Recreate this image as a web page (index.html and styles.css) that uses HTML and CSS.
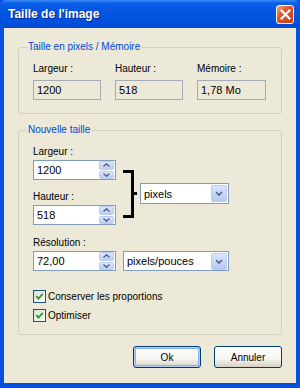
FILE: index.html
```html
<!DOCTYPE html>
<html lang="fr">
<head>
    <meta charset="UTF-8">
    <title>Taille de l'image</title>
    <link rel="stylesheet" href="styles.css">
</head>
<body>
<div class="window">
    <div class="titlebar">
        <span class="title">Taille de l'image</span>
        <span class="close">
            <svg width="11" height="11" viewBox="0 0 11 11"><path d="M1.5 1.5 L9.5 9.5 M9.5 1.5 L1.5 9.5" stroke="#fff" stroke-width="2.2" stroke-linecap="square"/></svg>
        </span>
    </div>
    <div class="client">
        <fieldset class="group info">
            <legend>Taille en pixels / Mémoire</legend>
            <div class="cols">
                <div class="col">
                    <label>Largeur :</label>
                    <div class="box readonly">1200</div>
                </div>
                <div class="col">
                    <label>Hauteur :</label>
                    <div class="box readonly">518</div>
                </div>
                <div class="col">
                    <label>Mémoire :</label>
                    <div class="box readonly wide">1,78 Mo</div>
                </div>
            </div>
        </fieldset>

        <fieldset class="group size">
            <legend>Nouvelle taille</legend>
            <div class="dims">
                <div class="dim-fields">
                    <label>Largeur :</label>
                    <div class="box spin">
                        <span class="val">1200</span>
                        <span class="spin-btns">
                            <span class="sb"><svg width="7" height="4" viewBox="0 0 7 4"><path d="M0.5 3.5 L3.5 0.8 L6.5 3.5" fill="none" stroke="#4d6185" stroke-width="1.4"/></svg></span>
                            <span class="sb"><svg width="7" height="4" viewBox="0 0 7 4"><path d="M0.5 0.5 L3.5 3.2 L6.5 0.5" fill="none" stroke="#4d6185" stroke-width="1.4"/></svg></span>
                        </span>
                    </div>
                    <label class="next">Hauteur :</label>
                    <div class="box spin">
                        <span class="val">518</span>
                        <span class="spin-btns">
                            <span class="sb"><svg width="7" height="4" viewBox="0 0 7 4"><path d="M0.5 3.5 L3.5 0.8 L6.5 3.5" fill="none" stroke="#4d6185" stroke-width="1.4"/></svg></span>
                            <span class="sb"><svg width="7" height="4" viewBox="0 0 7 4"><path d="M0.5 0.5 L3.5 3.2 L6.5 0.5" fill="none" stroke="#4d6185" stroke-width="1.4"/></svg></span>
                        </span>
                    </div>
                </div>
                <div class="bracket"></div>
                <div class="box select unit">
                    <span class="val">pixels</span>
                    <span class="drop"><svg width="8" height="5" viewBox="0 0 8 5"><path d="M1 1 L4 4 L7 1" fill="none" stroke="#4d6185" stroke-width="1.6"/></svg></span>
                </div>
            </div>

            <label class="res">Résolution :</label>
            <div class="res-row">
                <div class="box spin">
                    <span class="val">72,00</span>
                    <span class="spin-btns">
                        <span class="sb"><svg width="7" height="4" viewBox="0 0 7 4"><path d="M0.5 3.5 L3.5 0.8 L6.5 3.5" fill="none" stroke="#4d6185" stroke-width="1.4"/></svg></span>
                        <span class="sb"><svg width="7" height="4" viewBox="0 0 7 4"><path d="M0.5 0.5 L3.5 3.2 L6.5 0.5" fill="none" stroke="#4d6185" stroke-width="1.4"/></svg></span>
                    </span>
                </div>
                <div class="box select resunit">
                    <span class="val">pixels/pouces</span>
                    <span class="drop"><svg width="8" height="5" viewBox="0 0 8 5"><path d="M1 1 L4 4 L7 1" fill="none" stroke="#4d6185" stroke-width="1.6"/></svg></span>
                </div>
            </div>

            <div class="check first">
                <span class="cb"><svg width="9" height="9" viewBox="0 0 9 9"><path d="M1.2 4.2 L3.5 6.6 L7.8 1.8" fill="none" stroke="#21a121" stroke-width="1.8"/></svg></span>
                <span>Conserver les proportions</span>
            </div>
            <div class="check">
                <span class="cb"><svg width="9" height="9" viewBox="0 0 9 9"><path d="M1.2 4.2 L3.5 6.6 L7.8 1.8" fill="none" stroke="#21a121" stroke-width="1.8"/></svg></span>
                <span>Optimiser</span>
            </div>
        </fieldset>

        <div class="buttons">
            <div class="btn default">Ok</div>
            <div class="btn">Annuler</div>
        </div>
    </div>
</div>
</body>
</html>
```

FILE: styles.css
```css
*{
    margin: 0;
    padding: 0;
    box-sizing: border-box;
}
body{
    font-family: "Liberation Sans", Arial, sans-serif;
    font-size: 10px;
    color: #000;
    background: #fff;
}
.window{
    width: 300px;
    height: 388px;
    background: #0850de;
    display: flex;
    flex-direction: column;
}
.titlebar{
    height: 28px;
    display: flex;
    align-items: center;
    justify-content: space-between;
    padding: 0 6px 0 8px;
    background: linear-gradient(#3d8bf5 0, #0a5fe9 3px, #0554e2 12px, #0051de 22px, #0148d2 28px);
    border-radius: 6px 6px 0 0;
}
.title{
    color: #fff;
    font-weight: bold;
    font-size: 12px;
    text-shadow: 1px 1px 0 #0a2a8a;
}
.close{
    width: 18px;
    height: 19px;
    border: 1px solid #fff;
    border-radius: 3px;
    background: linear-gradient(135deg, #f4a88a 0, #e4532a 40%, #cc3a10 100%);
    display: flex;
    align-items: center;
    justify-content: center;
    margin-top: 1px;
}
.client{
    flex: 1;
    margin: 0 4px 5px 4px;
    background: #ece9d8;
    padding: 12px 14px 0 14px;
}
.group{
    border: 1px solid #d0d0bf;
    border-radius: 3px;
    padding: 8px 14px 12px 14px;
}
.group legend{
    color: #0046d5;
    padding: 0 1px;
    margin-left: -6px;
    line-height: 14px;
}
label{
    display: block;
    line-height: 13px;
}
.info{
    padding-bottom: 13px;
}
.cols{
    display: flex;
    gap: 14px;
}
.col label{
    margin-bottom: 5px;
}
.box{
    height: 20px;
    border: 1px solid #7f9db9;
    background: #fff;
    display: flex;
    align-items: center;
    padding-left: 3px;
    font-size: 11px;
}
.readonly{
    width: 68px;
    background: #ece9d8;
    border-color: #a5acb5;
}
.readonly.wide{
    width: 69px;
}
.size{
    margin-top: 9px;
}
.dims{
    display: flex;
    align-items: flex-end;
}
.dim-fields label{
    margin-bottom: 2px;
}
.dim-fields .next{
    margin-top: 10px;
}
.spin{
    width: 83px;
    justify-content: space-between;
    padding-right: 1px;
}
.spin-btns{
    display: flex;
    flex-direction: column;
    gap: 1px;
    height: 18px;
}
.sb{
    width: 15px;
    height: 8.5px;
    flex: 1;
    background: linear-gradient(#dbe6fd, #bccdf5);
    border: 1px solid #bccbee;
    border-radius: 2px;
    display: flex;
    align-items: center;
    justify-content: center;
}
.bracket{
    width: 11px;
    height: 48px;
    margin: 0 0 7px 7px;
    border: 3px solid #000;
    border-left: none;
    position: relative;
}
.bracket::after{
    content: "";
    position: absolute;
    right: -6px;
    top: 19px;
    width: 4px;
    height: 3px;
    background: #000;
}
.select{
    justify-content: space-between;
    padding-right: 1px;
}
.unit{
    width: 89px;
    height: 21px;
    margin: 0 0 21px 6px;
}
.drop{
    width: 16px;
    height: 17px;
    background: linear-gradient(#dbe6fd, #b5c8f5);
    border: 1px solid #bccbee;
    border-radius: 2px;
    display: flex;
    align-items: center;
    justify-content: center;
}
.res{
    margin-top: 11px;
    margin-bottom: 2px;
}
.res-row{
    display: flex;
    gap: 7px;
}
.resunit{
    width: 106px;
}
.check{
    display: flex;
    align-items: center;
    gap: 2px;
    margin-top: 6px;
    line-height: 13px;
    font-size: 10px;
}
.check.first{
    margin-top: 19px;
}
.cb{
    width: 13px;
    height: 13px;
    border: 1px solid #1c5180;
    background: linear-gradient(135deg, #dcdcd7, #fff);
    display: flex;
    align-items: center;
    justify-content: center;
}
.buttons{
    display: flex;
    justify-content: flex-end;
    gap: 13px;
    margin-top: 11px;
}
.btn{
    width: 68px;
    height: 22px;
    border: 1px solid #003c74;
    border-radius: 3px;
    background: linear-gradient(#ffffff, #f4f4f0 60%, #d6d0c5);
    display: flex;
    align-items: center;
    justify-content: center;
    font-size: 10px;
}
.btn.default{
    box-shadow: inset 0 0 0 1px #b5cff7, inset 0 0 0 2px #8bb0ef;
}
```
